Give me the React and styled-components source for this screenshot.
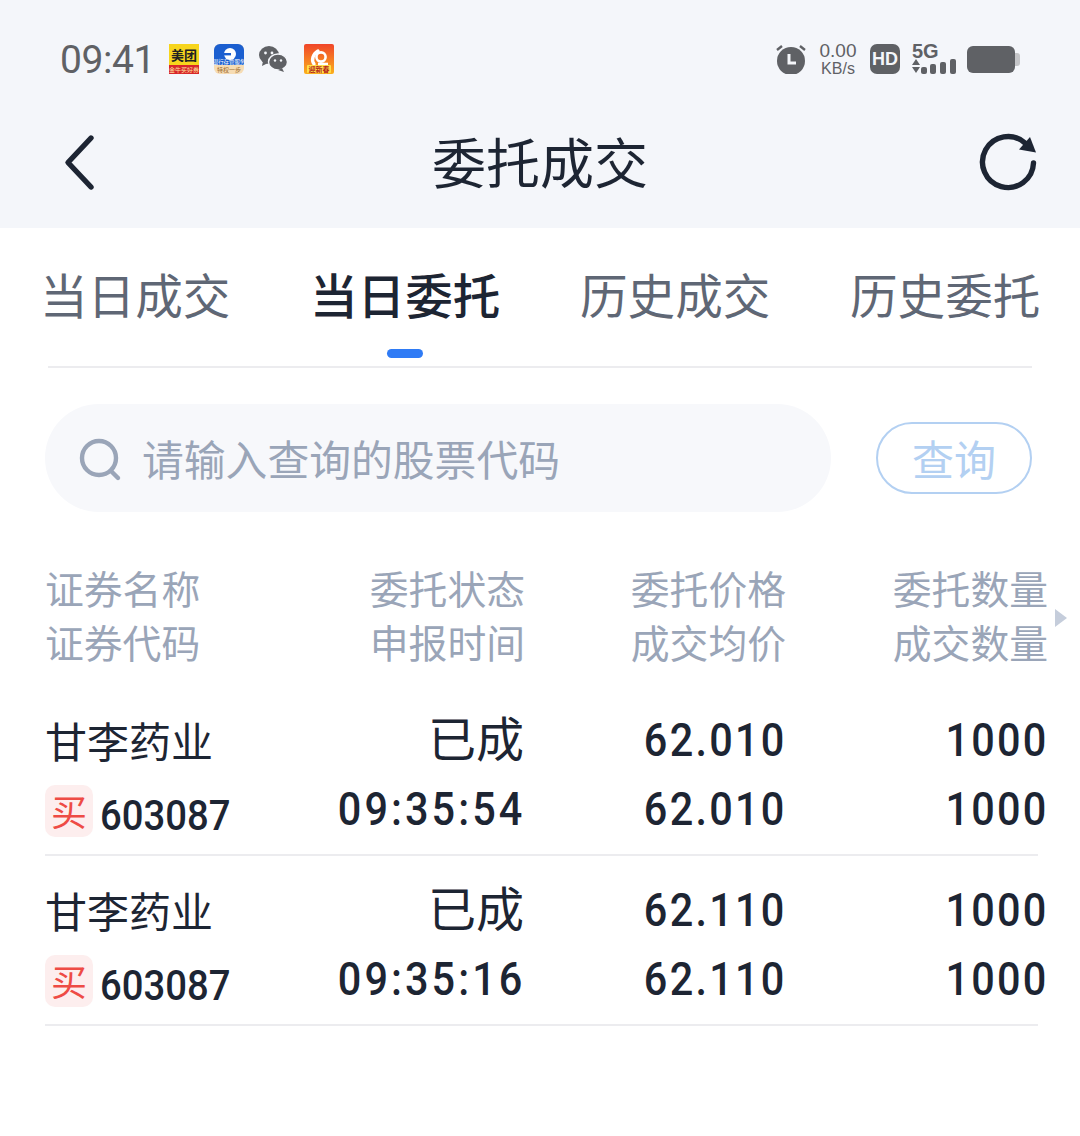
import React from "react";
import styled, { createGlobalStyle } from "styled-components";

const GlobalStyle = createGlobalStyle`
  html, body {
    margin: 0;
    padding: 0;
    background: #ffffff;
    font-family: "Noto Sans CJK SC", "Noto Sans", sans-serif;
  }
  * { box-sizing: border-box; }
`;

const orders = [
  { name: "甘李药业", side: "买", code: "603087", status: "已成", time: "09:35:54", price: "62.010", avg: "62.010", qty: "1000", done: "1000" },
  { name: "甘李药业", side: "买", code: "603087", status: "已成", time: "09:35:16", price: "62.110", avg: "62.110", qty: "1000", done: "1000" },
];

const tabs = ["当日成交", "当日委托", "历史成交", "历史委托"];

const heads = [
  ["证券名称", "证券代码"],
  ["委托状态", "申报时间"],
  ["委托价格", "成交均价"],
  ["委托数量", "成交数量"],
];

function StatusIcons() {
  return (
    <AppIcons>
      <svg width="30" height="30" viewBox="0 0 30 30">
        <rect width="30" height="22" fill="#f7d51d" />
        <rect y="21" width="30" height="9" fill="#d8262a" />
        <text x="15" y="16" textAnchor="middle" fontSize="13" fontWeight="700" fill="#222" fontFamily="Noto Sans CJK SC">美团</text>
        <text x="15" y="28" textAnchor="middle" fontSize="6" fill="#ffe3a0" fontFamily="Noto Sans CJK SC">金牛买好券</text>
      </svg>
      <svg width="30" height="30" viewBox="0 0 30 30">
        <rect width="30" height="30" rx="6" fill="#f6dcb4" />
        <path d="M0 6a6 6 0 0 1 6-6h18a6 6 0 0 1 6 6v15H0z" fill="#1b5fd0" />
        <circle cx="16" cy="10" r="6" fill="#fff" />
        <path d="M9 9h8v2.4H9z" fill="#1b5fd0" />
        <text x="15" y="19.5" textAnchor="middle" fontSize="5.4" fill="#fff" fontFamily="Noto Sans CJK SC">银行存管服务</text>
        <text x="15" y="28" textAnchor="middle" fontSize="6" fill="#9c6a2c" fontFamily="Noto Sans CJK SC">特权一步</text>
      </svg>
      <svg width="30" height="28" viewBox="0 0 30 28">
        <ellipse cx="10" cy="10" rx="10" ry="9" fill="#5f6165" />
        <path d="M4 16l-1 5 6-3z" fill="#5f6165" />
        <ellipse cx="19" cy="17" rx="9.5" ry="8" fill="#5f6165" stroke="#f4f6fa" strokeWidth="1.4" />
        <path d="M23 23l2 4-6-2z" fill="#5f6165" />
        <circle cx="6.5" cy="8" r="1.4" fill="#f4f6fa" />
        <circle cx="13" cy="8" r="1.4" fill="#f4f6fa" />
        <circle cx="16" cy="15.5" r="1.2" fill="#f4f6fa" />
        <circle cx="22" cy="15.5" r="1.2" fill="#f4f6fa" />
      </svg>
      <svg width="30" height="30" viewBox="0 0 30 30">
        <defs>
          <linearGradient id="uc" x1="0" y1="0" x2="0" y2="1">
            <stop offset="0" stopColor="#f0452a" />
            <stop offset="1" stopColor="#fbb01c" />
          </linearGradient>
        </defs>
        <rect width="30" height="30" rx="2" fill="url(#uc)" />
        <path d="M10 20c-3-4-1-10 4-13" fill="none" stroke="#fff" strokeWidth="3.4" strokeLinecap="round" />
        <circle cx="17" cy="13" r="4.6" fill="none" stroke="#fff" strokeWidth="2.6" />
        <path d="M14 20h10" stroke="#fff" strokeWidth="2.6" />
        <rect x="3" y="21" width="24" height="8" rx="1" fill="#ffe04a" />
        <text x="15" y="27.6" textAnchor="middle" fontSize="7" fontWeight="700" fill="#b5261a" fontFamily="Noto Sans CJK SC">迎新春</text>
      </svg>
    </AppIcons>
  );
}

function SystemIcons() {
  return (
    <SystemRow>
      <svg width="30" height="30" viewBox="0 0 30 30">
        <circle cx="15" cy="17" r="14" fill="#5f6165" />
        <path d="M13 10v9h7" fill="none" stroke="#f4f6fa" strokeWidth="3" />
        <path d="M1 6l5-4M29 6l-5-4" stroke="#5f6165" strokeWidth="2.4" />
      </svg>
      <Speed>
        <SpeedValue>0.00</SpeedValue>
        <SpeedUnit>KB/s</SpeedUnit>
      </Speed>
      <HdBadge>HD</HdBadge>
      <NetBlock>
        <NetLabel>5G</NetLabel>
        <svg width="44" height="15" viewBox="0 0 44 15">
          <path d="M0 6l4-6 4 6zM0 8h8l-4 6z" fill="#5f6165" />
          <rect x="9" y="8" width="6" height="7" rx="2" fill="#5f6165" />
          <rect x="18" y="5" width="6" height="10" rx="2" fill="#5f6165" />
          <rect x="28" y="3" width="6" height="12" rx="2" fill="#5f6165" />
          <rect x="38" y="0" width="6" height="15" rx="2" fill="#5f6165" />
        </svg>
      </NetBlock>
      <Battery>
        <BatteryBody />
        <BatteryNub />
      </Battery>
    </SystemRow>
  );
}

function OrderRow({ order }) {
  return (
    <Row>
      <NameCell>
        <Name>{order.name}</Name>
        <CodeLine>
          <SideTag>{order.side}</SideTag>
          <Code>{order.code}</Code>
        </CodeLine>
      </NameCell>
      <ValueCell>
        <StatusText>{order.status}</StatusText>
        <Digits $wide>{order.time}</Digits>
      </ValueCell>
      <ValueCell>
        <Digits>{order.price}</Digits>
        <Digits>{order.avg}</Digits>
      </ValueCell>
      <ValueCell>
        <Digits>{order.qty}</Digits>
        <Digits>{order.done}</Digits>
      </ValueCell>
    </Row>
  );
}

export default function App() {
  return (
    <Page>
      <GlobalStyle />
      <TopArea>
        <StatusBar>
          <StatusLeft>
            <Clock>09:41</Clock>
            <StatusIcons />
          </StatusLeft>
          <SystemIcons />
        </StatusBar>
        <NavBar>
          <svg width="40" height="60" viewBox="0 0 40 60">
            <path d="M31 7L8 31.5 31 56" fill="none" stroke="#1d2533" strokeWidth="5.4" strokeLinecap="round" strokeLinejoin="round" />
          </svg>
          <Title>委托成交</Title>
          <svg width="60" height="60" viewBox="0 0 60 60">
            <path d="M47 12A25.5 25.5 0 1 0 55.5 32" fill="none" stroke="#1d2533" strokeWidth="5.4" strokeLinecap="round" />
            <path d="M52 6L58 21.5 41 18.5z" fill="#1d2533" />
          </svg>
        </NavBar>
      </TopArea>

      <TabBar>
        {tabs.map((t, i) => (
          <Tab key={t} $active={i === 1}>{t}</Tab>
        ))}
      </TabBar>

      <SearchRow>
        <SearchBox>
          <svg width="44" height="44" viewBox="0 0 44 44">
            <circle cx="20" cy="20" r="17" fill="none" stroke="#9aa5b8" strokeWidth="4.4" />
            <path d="M32 33l7 7" stroke="#9aa5b8" strokeWidth="4.4" strokeLinecap="round" />
          </svg>
          <Placeholder>请输入查询的股票代码</Placeholder>
        </SearchBox>
        <QueryButton>查询</QueryButton>
      </SearchRow>

      <HeadRow>
        {heads.map((h, i) => (
          <HeadCell key={h[0]} $first={i === 0}>
            <span>{h[0]}</span>
            <span>{h[1]}</span>
          </HeadCell>
        ))}
        <MoreArrow />
      </HeadRow>

      {orders.map((o) => (
        <OrderRow key={o.time} order={o} />
      ))}
    </Page>
  );
}

const Page = styled.div`
  width: 1080px;
  height: 1136px;
  overflow: hidden;
  background: #ffffff;
  color: #1d2533;
`;

const TopArea = styled.header`
  height: 228px;
  background: #f4f6fa;
`;

const StatusBar = styled.div`
  height: 118px;
  padding: 0 60px 0 60px;
  display: flex;
  align-items: center;
  justify-content: space-between;
`;

const StatusLeft = styled.div`
  display: flex;
  align-items: center;
  gap: 14px;
`;

const Clock = styled.span`
  font-family: Roboto, sans-serif;
  font-size: 39px;
  letter-spacing: -0.4px;
  color: #5f6165;
  line-height: 1;
  margin-top: 2px;
`;

const AppIcons = styled.div`
  display: flex;
  align-items: center;
  gap: 15px;
  svg { display: block; }
`;

const SystemRow = styled.div`
  display: flex;
  align-items: center;
  gap: 12px;
  svg { display: block; }
`;

const Speed = styled.div`
  width: 40px;
  display: flex;
  flex-direction: column;
  align-items: center;
  font-family: "Liberation Sans", sans-serif;
  color: #5f6165;
`;

const SpeedValue = styled.span`
  font-size: 19px;
  line-height: 18px;
`;

const SpeedUnit = styled.span`
  font-size: 16px;
  line-height: 17px;
`;

const HdBadge = styled.span`
  width: 30px;
  height: 30px;
  border-radius: 7px;
  background: #5f6165;
  color: #f4f6fa;
  font-family: "Liberation Sans", sans-serif;
  font-size: 18px;
  font-weight: 700;
  line-height: 30px;
  text-align: center;
`;

const NetBlock = styled.div`
  display: flex;
  flex-direction: column;
`;

const NetLabel = styled.span`
  font-family: "Liberation Sans", sans-serif;
  font-size: 20px;
  font-weight: 700;
  line-height: 15px;
  color: #5f6165;
`;

const Battery = styled.div`
  display: flex;
  align-items: center;
  margin-left: -1px;
`;

const BatteryBody = styled.div`
  width: 48px;
  height: 27px;
  border-radius: 6px;
  background: #5f6165;
`;

const BatteryNub = styled.div`
  width: 5px;
  height: 13px;
  border-radius: 0 3px 3px 0;
  background: #c4c5c8;
`;

const NavBar = styled.div`
  height: 110px;
  padding: 0 42px 0 60px;
  margin-top: -12px;
  display: flex;
  align-items: center;
  justify-content: space-between;
  svg { display: block; }
`;

const Title = styled.h1`
  margin: 0 0 0 2px;
  font-size: 54px;
  font-weight: 400;
  line-height: 1;
  color: #1d2533;
`;

const TabBar = styled.nav`
  height: 140px;
  margin: 0 48px;
  border-bottom: 2px solid #ececef;
  display: flex;
  align-items: flex-start;
  gap: 79.6px;
`;

const Tab = styled.span`
  position: relative;
  margin-top: 36px;
  font-size: 47.6px;
  line-height: 60px;
  font-weight: ${(p) => (p.$active ? 500 : 400)};
  color: ${(p) => (p.$active ? "#1d2533" : "#5f6775")};
  white-space: nowrap;

  &:first-child { margin-left: -8px; }

  ${(p) =>
    p.$active &&
    `&::after {
      content: "";
      position: absolute;
      left: 50%;
      top: 85px;
      width: 36px;
      height: 9px;
      margin-left: -18px;
      border-radius: 5px;
      background: #2f7bf5;
    }`}
`;

const SearchRow = styled.div`
  margin-top: 36px;
  padding: 0 48px 0 45px;
  display: flex;
  align-items: center;
  justify-content: space-between;
`;

const SearchBox = styled.div`
  width: 786px;
  height: 108px;
  padding: 0 0 0 34px;
  border-radius: 54px;
  background: #f7f8fb;
  display: flex;
  align-items: center;
  gap: 19px;
  svg { display: block; flex: none; margin-top: 4px; }
`;

const Placeholder = styled.span`
  font-size: 41.8px;
  line-height: 1;
  margin-top: 2px;
  color: #9aa5b8;
  white-space: nowrap;
`;

const QueryButton = styled.button`
  width: 156px;
  height: 72px;
  padding: 0;
  border: 2px solid #b3d0f2;
  border-radius: 36px;
  background: #ffffff;
  color: #b3d0f2;
  font-family: inherit;
  font-size: 42px;
  line-height: 1;
`;

const HeadRow = styled.div`
  position: relative;
  margin-top: 48px;
  margin-bottom: 18px;
  display: grid;
  grid-template-columns: 255px 225px 261px 262px;
  padding-left: 45px;
`;

const HeadCell = styled.div`
  display: flex;
  flex-direction: column;
  align-items: ${(p) => (p.$first ? "flex-start" : "flex-end")};
  font-size: 38.8px;
  line-height: 54px;
  color: #9aa5b8;
  white-space: nowrap;
`;

const MoreArrow = styled.i`
  position: absolute;
  left: 1055px;
  top: 49px;
  width: 0;
  height: 0;
  border-left: 12px solid #c5cddb;
  border-top: 9.5px solid transparent;
  border-bottom: 9.5px solid transparent;
`;

const Row = styled.div`
  height: 170px;
  margin-right: 42px;
  padding-left: 45px;
  display: grid;
  grid-template-columns: 255px 225px 261px 262px;
  align-items: start;
  position: relative;

  &::after {
    content: "";
    position: absolute;
    left: 45px;
    right: 0;
    bottom: 0;
    height: 2px;
    background: #ececef;
  }
`;

const NameCell = styled.div`
  display: flex;
  flex-direction: column;
  padding-top: 24px;
`;

const Name = styled.span`
  font-size: 42px;
  line-height: 60px;
  color: #1d2533;
`;

const CodeLine = styled.div`
  display: flex;
  align-items: flex-start;
  gap: 7px;
  margin-top: 15px;
`;

const SideTag = styled.span`
  flex: none;
  width: 48px;
  height: 52px;
  border-radius: 10px;
  background: #fdeeee;
  color: #ee4b45;
  font-size: 36px;
  line-height: 50px;
  text-align: center;
`;

const Code = styled.span`
  margin-top: 4px;
  font-family: Roboto, sans-serif;
  font-weight: 500;
  font-size: 43px;
  line-height: 52px;
  transform: scaleX(0.89);
  transform-origin: left center;
  color: #1d2533;
`;

const ValueCell = styled.div`
  display: flex;
  flex-direction: column;
  align-items: flex-end;
  padding-top: 25px;
  gap: 11px;
`;

const StatusText = styled.span`
  margin: -4px 1px 4px 0;
  font-size: 48px;
  line-height: 58px;
  color: #1d2533;
`;

const Digits = styled.span`
  margin-right: ${(p) => (p.$wide ? "0" : "-1px")};
  font-family: Roboto, sans-serif;
  font-weight: 500;
  font-size: 46px;
  letter-spacing: ${(p) => (p.$wide ? "3.4px" : "2.5px")};
  line-height: 58px;
  transform: scaleX(0.9);
  transform-origin: right center;
  color: #1d2533;
`;
